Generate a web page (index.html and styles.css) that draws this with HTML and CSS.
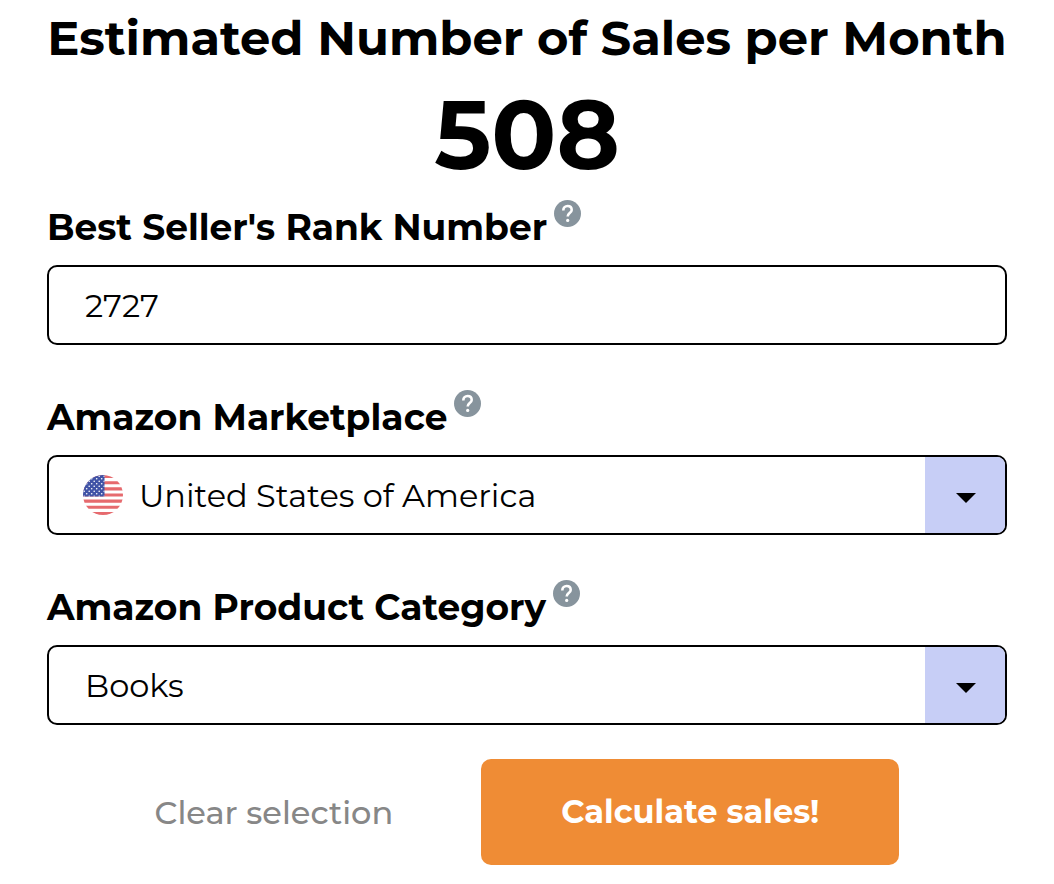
FILE: index.html
```html
<!DOCTYPE html>
<html lang="en">
<head>
  <meta charset="UTF-8">
  <meta name="viewport" content="width=device-width, initial-scale=1">
  <title>Sales Calculator</title>
  <link rel="stylesheet" href="styles.css">
</head>
<body>
  <form class="calculator" onsubmit="return false">
    <h1 class="title">Estimated Number of Sales per Month</h1>
    <output class="result" for="rank marketplace category">508</output>

    <div class="field">
      <div class="field-head">
        <label for="rank">Best Seller's Rank Number</label>
        <button class="help" type="button" aria-label="About rank number">
          <svg viewBox="0 0 27 27"><circle cx="13.5" cy="13.5" r="13.5"/><path d="M9.3 10.4C9.3 7.8 11.2 6 13.6 6s4.1 1.6 4.1 3.9c0 3.1-4 3.3-4 6.5"/><circle class="dot" cx="13.7" cy="20.4" r="1.6"/></svg>
        </button>
      </div>
      <input class="control" id="rank" type="text" inputmode="numeric" value="2727">
    </div>

    <div class="field">
      <div class="field-head">
        <label for="marketplace">Amazon Marketplace</label>
        <button class="help" type="button" aria-label="About marketplace">
          <svg viewBox="0 0 27 27"><circle cx="13.5" cy="13.5" r="13.5"/><path d="M9.3 10.4C9.3 7.8 11.2 6 13.6 6s4.1 1.6 4.1 3.9c0 3.1-4 3.3-4 6.5"/><circle class="dot" cx="13.7" cy="20.4" r="1.6"/></svg>
        </button>
      </div>
      <div class="select-box">
        <select class="control with-flag" id="marketplace">
          <option>United States of America</option>
        </select>
        <svg class="flag" viewBox="0 0 40 40" aria-hidden="true">
          <defs>
            <clipPath id="round"><circle cx="20" cy="20" r="20"/></clipPath>
            <pattern id="stars" width="5" height="5" patternUnits="userSpaceOnUse">
              <circle cx="1.2" cy="1.2" r=".8" fill="#fff"/>
              <circle cx="3.7" cy="3.7" r=".8" fill="#fff"/>
            </pattern>
          </defs>
          <g clip-path="url(#round)">
            <path fill="#fff" d="M0 0h40v40H0z"/>
            <path stroke="#e66a6e" stroke-width="3.08" d="M0 1.54h40M0 7.7h40M0 13.85h40M0 20h40M0 26.15h40M0 32.3h40M0 38.46h40"/>
            <path fill="#4053a6" d="M0 0h21.5v21.5H0z"/>
            <path fill="url(#stars)" d="M0 0h21.5v21.5H0z"/>
          </g>
        </svg>
        <span class="arrow"><svg viewBox="0 0 20 10"><path d="M0 0h20L10 10z"/></svg></span>
      </div>
    </div>

    <div class="field">
      <div class="field-head">
        <label for="category">Amazon Product Category</label>
        <button class="help" type="button" aria-label="About product category">
          <svg viewBox="0 0 27 27"><circle cx="13.5" cy="13.5" r="13.5"/><path d="M9.3 10.4C9.3 7.8 11.2 6 13.6 6s4.1 1.6 4.1 3.9c0 3.1-4 3.3-4 6.5"/><circle class="dot" cx="13.7" cy="20.4" r="1.6"/></svg>
        </button>
      </div>
      <div class="select-box">
        <select class="control" id="category">
          <option>Books</option>
        </select>
        <span class="arrow"><svg viewBox="0 0 20 10"><path d="M0 0h20L10 10z"/></svg></span>
      </div>
    </div>

    <div class="actions">
      <button class="clear" type="reset">Clear selection</button>
      <button class="calculate" type="submit">Calculate sales!</button>
    </div>
  </form>
</body>
</html>
```

FILE: styles.css
```css
* {
  box-sizing: border-box;
}
body {
  margin: 0;
  background: #fff;
  color: #000;
  font-family: Montserrat, Inter, sans-serif;
}
button, input, select {
  font-family: inherit;
}
.calculator {
  padding: 8px 47px 19px;
}
.title {
  margin: 0;
  font-size: 48px;
  line-height: 60px;
  font-weight: 700;
  text-align: center;
}
.result {
  display: block;
  margin: 12px 0 10px;
  font-size: 96px;
  line-height: 110px;
  font-weight: 700;
  text-align: center;
}
.field {
  margin-bottom: 45px;
}
.field-head {
  display: flex;
  align-items: flex-start;
  gap: 7px;
  margin-bottom: 11px;
}
.field-head label {
  font-size: 36px;
  line-height: 54px;
  font-weight: 700;
}
.help {
  width: 27px;
  height: 27px;
  padding: 0;
  border: 0;
  background: none;
}
.help svg {
  display: block;
  fill: #87949d;
}
.help path {
  fill: none;
  stroke: #fff;
  stroke-width: 2.6;
}
.help .dot {
  fill: #fff;
}
.control {
  display: block;
  width: 100%;
  height: 80px;
  padding: 0 36px;
  border: 2px solid #000;
  border-radius: 10px;
  background: #fff;
  color: #000;
  font-size: 32px;
  font-weight: 400;
  appearance: none;
}
.select-box {
  position: relative;
}
.with-flag {
  padding-left: 90px;
}
.flag {
  position: absolute;
  top: 20px;
  left: 36px;
  width: 40px;
  height: 40px;
}
.arrow {
  position: absolute;
  top: 2px;
  right: 2px;
  bottom: 2px;
  width: 80px;
  display: flex;
  align-items: center;
  justify-content: center;
  padding: 5px 0 0 2px;
  border-radius: 0 8px 8px 0;
  background: #c7cef6;
  pointer-events: none;
}
.arrow svg {
  width: 20px;
  height: 10px;
}
.actions {
  display: flex;
  justify-content: center;
  align-items: center;
  gap: 88px;
  margin-top: -11px;
}
.clear {
  padding: 0;
  border: 0;
  background: none;
  color: #878787;
  font-size: 32px;
  font-weight: 500;
}
.calculate {
  padding: 33px 80px;
  border: 0;
  border-radius: 10px;
  background: #ef8c35;
  color: #fff;
  font-size: 32px;
  line-height: 40px;
  font-weight: 700;
}
```
